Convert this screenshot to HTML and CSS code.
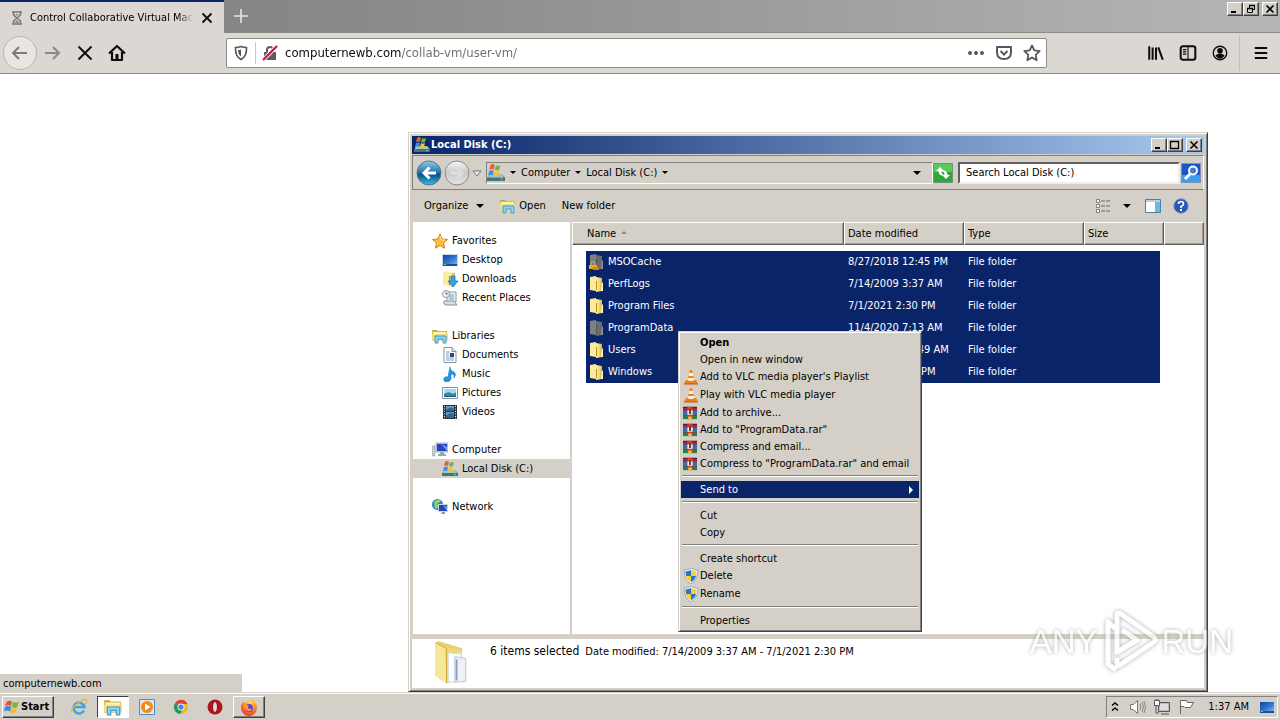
FILE: index.html
```html
<!DOCTYPE html>
<html lang="en">
<head>
<meta charset="utf-8">
<title>Control Collaborative Virtual Machines</title>
<link rel="stylesheet" href="styles.css">
</head>
<body>
<svg class="defs" aria-hidden="true">
  <defs>
    <linearGradient id="gFolder" x1="0" x2="1"><stop offset="0" stop-color="#fff3a8"/><stop offset=".55" stop-color="#f0d878"/><stop offset="1" stop-color="#d8b040"/></linearGradient>
    <linearGradient id="gBlue" x1="0" y1="0" x2="0" y2="1"><stop offset="0" stop-color="#8fd0ee"/><stop offset=".5" stop-color="#1d6ea8"/><stop offset=".55" stop-color="#0a4a86"/><stop offset="1" stop-color="#35c0ec"/></linearGradient>
    <linearGradient id="gGrey" x1="0" y1="0" x2="0" y2="1"><stop offset="0" stop-color="#f4f4f4"/><stop offset=".5" stop-color="#c9c9c9"/><stop offset="1" stop-color="#e6e6e6"/></linearGradient>
    <linearGradient id="gScreen" x1="0" y1="0" x2="1" y2="1"><stop offset="0" stop-color="#12419c"/><stop offset=".5" stop-color="#2e74cf"/><stop offset="1" stop-color="#7db8ee"/></linearGradient>
    <radialGradient id="gFox" cx=".6" cy=".2" r=".9"><stop offset="0" stop-color="#ffe040"/><stop offset=".5" stop-color="#ff8a1e"/><stop offset="1" stop-color="#e8204e"/></radialGradient>
  </defs>
  <symbol id="drive" viewBox="0 0 16 16">
    <path d="M2 9h11l3 3v3H0v-2z" fill="#5b8d8c"/><path d="M0 12h16v3H0z" fill="#477574"/><path d="M2 9h11l2 3H1z" fill="#a9c5c0"/><path d="M12 13h2v1h-2z" fill="#6de05c"/>
    <path d="M3 1q2-2 4 0L6 5Q4 4 2 5z" fill="#e8622c"/><path d="M8 1q2 1 4 0l-1 4q-2 1-4 0z" fill="#71b544"/><path d="M2 6q2-1 4 0l-1 4q-2-1-4 0z" fill="#3f8de0"/><path d="M7 6q2 1 4 0l-1 4q-2 1-4 0z" fill="#f5c52c"/>
  </symbol>
  <symbol id="folder" viewBox="0 0 16 16">
    <path d="M1 1l6-1v15l-6-1z" fill="#fbeb9c"/><path d="M7 1l6 1v13l-6 1z" fill="url(#gFolder)"/><path d="M13 6l1 1v8h-2z" fill="#fff7c4"/><path d="M7.500 5v9" stroke="#b58e28"/>
  </symbol>
  <symbol id="folder-dim" viewBox="0 0 16 16">
    <path d="M1 1l6-1v15l-6-1z" fill="#7c8080"/><path d="M7 1l6 1v13l-6 1z" fill="#696c6c"/><path d="M13 6l1 1v8h-2z" fill="#8f918e"/><path d="M7.500 5v9" stroke="#51565b"/>
  </symbol>
  <symbol id="folder-lock" viewBox="0 0 16 16">
    <use href="#folder-dim"/><path d="M2 11V9q2-3 4 0v2" fill="none" stroke="#bcaf76"/><path d="M0 11h8v4H0z" fill="#efa924"/><path d="M4 13h6v3H4z" fill="#c98919"/>
  </symbol>
  <symbol id="library" viewBox="0 0 16 16">
    <path d="M0 2h5l1 1h9v10H0z" fill="#d8b34c"/><path d="M1 4h13v3H1z" fill="#fff4ae"/><path d="M0 6h16v7H0z" fill="#f3dc84"/><path d="M3 15V8h11v7h-3v-4H6v4z" fill="#8fd3f2" stroke="#3e9ccb"/><path d="M1 3h4" stroke="#77b86e"/>
  </symbol>
  <symbol id="star" viewBox="0 0 16 16"><path d="M8 1l2 5 5.500.5-4 3.500 1.200 5.200L8 12.500l-4.700 2.700L4.500 10l-4-3.500L6 6z" fill="#ffbd3d" stroke="#df7d12"/><path d="M8 3l1 4h4" stroke="#ffe9a0" fill="none"/></symbol>
  <symbol id="desktop" viewBox="0 0 16 16"><path d="M0 2h16v12H0z" fill="#c7d6e5"/><path d="M1 3h14v10H1z" fill="url(#gScreen)"/><path d="M1 12h14v2H1z" fill="#234f8b"/><path d="M2 12h2v1H2z" fill="#73d67a"/></symbol>
  <symbol id="downloads" viewBox="0 0 16 16"><use href="#folder"/><path d="M9 5h4v5h3l-5 6-5-6h3z" fill="#3ba1e8" stroke="#1468ad" stroke-width=".7"/></symbol>
  <symbol id="recent" viewBox="0 0 16 16"><path d="M5 2h9v10H5z" fill="#edf2f6" stroke="#8c99a4"/><path d="M7 5h5M7 7h5M7 9h5" stroke="#799bbb"/><path d="M2 11h10l3 4H4q-3 0-2-4z" fill="#d8dee3" stroke="#8894a0"/><circle cx="4" cy="4" r="3.500" fill="#f6f6f6" stroke="#8b98a5"/><path d="M4 2v2h2" fill="none" stroke="#546577"/></symbol>
  <symbol id="doc" viewBox="0 0 16 16"><path d="M2 .5h8l4 4v11H2z" fill="#fff" stroke="#8492a1"/><path d="M10 .5v4h4" fill="#dae4ed" stroke="#8492a1"/><path d="M4 5h4M4 7h3M4 9h3M4 11h8M4 13h8" stroke="#7ba0c6"/><path d="M8 6h4v4H8z" fill="#284b7c"/></symbol>
  <symbol id="music" viewBox="0 0 16 16"><path d="M8 1q0 4 4 5 3 2 0 6 1-4-3-4v5q-1 3-5 3-3-1-2-4 2-2 4-1z" fill="#2696e3" stroke="#1478bd" stroke-width=".6"/></symbol>
  <symbol id="pictures" viewBox="0 0 16 16"><path d="M.5 2.500h15v11H.5z" fill="#fff" stroke="#85919e"/><path d="M2 4h12v8H2z" fill="#9ddcf3"/><path d="M2 9q4-3 7-1t5-1v5H2z" fill="#338b90"/><path d="M2 11h12v1H2z" fill="#1f567f"/></symbol>
  <symbol id="videos" viewBox="0 0 16 16"><path d="M1 1h14v14H1z" fill="#2d3439"/><path d="M4 2h8v5H4zM4 8h8v6H4z" fill="#5c9cc8"/><path d="M4 6q4-4 8-1v2H4zM4 12q4-5 8-2v4H4z" fill="#3a6485"/><path d="M2.500 2v13M13.500 2v13" stroke="#e8eef2" stroke-dasharray="1 1.500"/></symbol>
  <symbol id="computer" viewBox="0 0 16 16"><path d="M0 4h3v10H0z" fill="#c7cbd0" stroke="#8c9198" stroke-width=".5"/><path d="M4 1h12v9H4z" fill="#cbd6e4" stroke="#7b8ba5" stroke-width=".6"/><path d="M5 2h10v7H5z" fill="#2544b8"/><path d="M9 2l6 3v4z" fill="#6f9eee"/><path d="M8 10h4v2h2v2H6v-2h2z" fill="#9ba5b2"/></symbol>
  <symbol id="network" viewBox="0 0 16 16"><circle cx="5.500" cy="5.500" r="5.500" fill="#2c86c9"/><path d="M2 3q4-4 7-1L5 5l2 3-4 2z" fill="#8fd66a"/><path d="M6 5h10v8H6z" fill="#cbd6e4"/><path d="M7 6h8v6H7z" fill="#1f45b8"/><path d="M11 6l4 2v4z" fill="#68a3ee"/><path d="M10 13h3v2h-4z" fill="#8f99a5"/></symbol>
  <symbol id="vlc" viewBox="0 0 16 16"><path d="M3 11h10l2 4H1z" fill="#ee7d13"/><path d="M7 1h2l3 11q-4 2-8 0z" fill="#f58417"/><path d="M6.200 4h3.600l.8 3H5.400zM4.800 9h6.400l.5 2q-4 2-7.400 0z" fill="#f5efe8"/><path d="M1 15h14" stroke="#b85a10"/></symbol>
  <symbol id="rar" viewBox="0 0 16 16"><path d="M0 1h16v4H0z" fill="#a81f55"/><path d="M0 6h16v4H0z" fill="#2c6cc4"/><path d="M0 11h16v4H0z" fill="#24833e"/><path d="M0 1.500h16M0 5.500h16M0 10.500h16" stroke="#222"/><path d="M5 1h6v14H5z" fill="#d33b2d"/><path d="M5 5h6v5H5z" fill="#f2eee4"/><path d="M7 4h2v5H7z" fill="#333"/><path d="M6 12h4v3H6z" fill="#e8c94c"/></symbol>
  <symbol id="shield" viewBox="0 0 16 16"><path d="M8 0q3 2 7 2 0 10-7 14Q1 12 1 2q4 0 7-2z" fill="#e9eef2" stroke="#8394a3" stroke-width=".7"/><path d="M8 2v6H3L2.500 3.500Q6 3 8 2z" fill="#2a74c9"/><path d="M8 2v6h5l.5-4.500Q10 3 8 2z" fill="#f7cf36"/><path d="M3 8h5v6Q4 12 3 8z" fill="#f7cf36"/><path d="M13 8H8v6q4-2 5-6z" fill="#2a74c9"/></symbol>
  <symbol id="flag" viewBox="0 0 18 16"><path d="M3 2q3-2 6 0L8 7Q5 5 1 7z" fill="#e6562b"/><path d="M10 2q3 2 7 0l-2 6q-3 2-6 0z" fill="#78b83e"/><path d="M1 8q4-2 7 0l-1 5q-3-2-7 0z" fill="#3c87df"/><path d="M9 9q3 2 6 0l-2 5q-3 2-6 0z" fill="#f4bd24"/></symbol>
</svg>

<div class="screen">
  <header class="tabstrip">
    <div class="tab">
      <svg class="i16" viewBox="0 0 16 16"><path d="M3 2h10M3 14h10M4.500 2v3L8 8l3.500-3V2M4.500 14v-3L8 8l3.500 3v3" fill="none" stroke="#77777a" stroke-width="1.500"/><path d="M6 12l2-2 2 2v1H6zM6 4h4L8 6z" fill="#8d8d90"/></svg>
      <span class="tab-title">Control Collaborative Virtual Machines</span>
      <button class="bare" aria-label="Close tab"><svg class="i16" viewBox="0 0 16 16"><path d="M3.500 3.500l9 9m0-9l-9 9" stroke="#0c0c0d" stroke-width="1.800"/></svg></button>
    </div>
    <button class="bare newtab" aria-label="New tab"><svg class="i16" viewBox="0 0 16 16"><path d="M8 1v14M1 8h14" stroke="#e4e4e4" stroke-width="1.600"/></svg></button>
    <div class="winbtns browser-btns">
      <button class="winbtn" aria-label="Minimize"><svg viewBox="0 0 12 10"><path d="M2 8h5" stroke="#000" stroke-width="2"/></svg></button>
      <button class="winbtn" aria-label="Restore"><svg viewBox="0 0 12 10"><path d="M4.500 4V1.500h5v4H8M2.500 4.500h5v4h-5z" fill="none" stroke="#000"/><path d="M4 1.500h6M2 4.500h6" stroke="#000" stroke-width="1.500"/></svg></button>
      <button class="winbtn close" aria-label="Close"><svg viewBox="0 0 12 10"><path d="M2.500 1.500l7 7m0-7l-7 7" stroke="#000" stroke-width="1.600"/></svg></button>
    </div>
  </header>

  <nav class="toolbar" aria-label="Browser">
    <div class="navbtns">
      <button class="bare back" aria-label="Back"><svg class="i20" viewBox="0 0 20 20"><path d="M17 10H3m6-6l-6 6 6 6" fill="none" stroke="#7d7b78" stroke-width="2"/></svg></button>
      <button class="bare" aria-label="Forward"><svg class="i20" viewBox="0 0 20 20"><path d="M2 10h14m-6-6l6 6-6 6" fill="none" stroke="#8a8885" stroke-width="2"/></svg></button>
      <button class="bare" aria-label="Stop"><svg class="i20" viewBox="0 0 20 20"><path d="M3.500 3.500l13 13m0-13l-13 13" stroke="#0c0c0d" stroke-width="2"/></svg></button>
      <button class="bare" aria-label="Home"><svg class="i20" viewBox="0 0 20 20"><path d="M2 10.500L10 3l8 7.500M5 9v8h10V9" fill="none" stroke="#0c0c0d" stroke-width="2.200" stroke-linejoin="round"/><path d="M8.500 11h3v6h-3z" fill="#0c0c0d"/></svg></button>
    </div>
    <div class="urlbar">
      <svg class="i16" viewBox="0 0 16 16"><path d="M8 1.500q2.500 1 5.500 1 .5 9-5.500 12Q2 11.500 2.500 2.500q3 0 5.500-1z" fill="none" stroke="#55555a" stroke-width="1.600"/><path d="M8 4.500v7Q5 9.500 5 5q2 0 3-.5z" fill="#55555a"/></svg>
      <span class="urlsep"></span>
      <svg class="i16" viewBox="0 0 16 16"><path d="M2 7h12v8H2z" fill="#5b5b60"/><path d="M5 8V5q0-3 3-3t3 3v3" fill="none" stroke="#5b5b60" stroke-width="2"/><path d="M1 15L15 1" stroke="#fff" stroke-width="4"/><path d="M1 15L15 1" stroke="#e0104c" stroke-width="2.400"/></svg>
      <input class="url" type="text" aria-label="Address" value="computernewb.com/collab-vm/user-vm/">
      <div class="urlacts">
        <button class="bare" aria-label="Page actions"><svg class="i20" viewBox="0 0 20 20"><g fill="#58585c"><circle cx="4" cy="10" r="2"/><circle cx="10" cy="10" r="2"/><circle cx="16" cy="10" r="2"/></g></svg></button>
        <button class="bare" aria-label="Save to Pocket"><svg class="i20" viewBox="0 0 20 20"><path d="M3 4h14v5q0 7-7 7T3 9z" fill="none" stroke="#58585c" stroke-width="2" stroke-linejoin="round"/><path d="M6.500 8l3.500 3.500L13.500 8" fill="none" stroke="#58585c" stroke-width="2"/></svg></button>
        <button class="bare" aria-label="Bookmark"><svg class="i20" viewBox="0 0 20 20"><path d="M10 2.500l2.300 4.900 5.400.7-4 3.700 1 5.300L10 14.500l-4.700 2.600 1-5.300-4-3.700 5.400-.7z" fill="none" stroke="#58585c" stroke-width="1.800" stroke-linejoin="round"/></svg></button>
      </div>
    </div>
    <div class="tools">
      <button class="bare" aria-label="Library"><svg class="i18" viewBox="0 0 16 16"><path d="M2 2v12M5 3v11M8 3v11M10 3l4 11" stroke="#0c0c0d" stroke-width="1.800" fill="none"/></svg></button>
      <button class="bare" aria-label="Sidebars"><svg class="i18" viewBox="0 0 16 16"><rect x="1.500" y="2" width="13" height="12" rx="2" fill="none" stroke="#0c0c0d" stroke-width="1.800"/><path d="M8 2v12M3.500 5h3M3.500 7h3M3.500 9h3" stroke="#0c0c0d"/></svg></button>
      <button class="bare" aria-label="Account"><svg class="i18" viewBox="0 0 16 16"><circle cx="8" cy="8" r="6" fill="none" stroke="#0c0c0d" stroke-width="1.200"/><circle cx="8" cy="6" r="2.500" fill="#0c0c0d"/><path d="M4 10q4-3 8 0-1.500 3-4 3t-4-3z" fill="#0c0c0d"/></svg></button>
      <span class="toolsep"></span>
      <button class="bare" aria-label="Open menu"><svg class="i18" viewBox="0 0 16 16"><path d="M2.500 3.500h11M2.500 8h11M2.500 12.500h11" stroke="#0c0c0d" stroke-width="1.800"/></svg></button>
    </div>
  </nav>

  <main class="page"><div class="status">computernewb.com</div></main>

  <footer class="taskbar">
    <button class="start"><svg class="i16" viewBox="0 0 18 16"><use href="#flag"/></svg>Start</button>
    <div class="tasks">
      <button class="task" aria-label="Internet Explorer"><svg class="i18" viewBox="0 0 18 18"><path d="M14 12.500A5.500 5.500 0 1 1 14.500 9H5" fill="none" stroke="#39a7e5" stroke-width="2.600"/><path d="M2 15Q0 12 7 6t9.500-4q1 1-1 4" fill="none" stroke="#e8b936" stroke-width="1.300"/></svg></button>
      <button class="task on" aria-label="Windows Explorer"><svg class="i18" viewBox="0 0 16 16"><use href="#library"/></svg></button>
      <button class="task" aria-label="Media Player"><svg class="i18" viewBox="0 0 18 18"><path d="M1.500 1.500h15v15h-15z" fill="#d8e8f6" stroke="#4c8fc6"/><circle cx="9" cy="9" r="6" fill="#f38a14"/><path d="M7 5.500l5.500 3.500L7 12.500z" fill="#fff"/></svg></button>
      <button class="task" aria-label="Chrome"><svg class="i18" viewBox="0 0 18 18"><circle cx="9" cy="9" r="7" fill="#e8b92a"/><path d="M9 9L3 5.300A7 7 0 0 1 15.500 6H9z" fill="#dc4437"/><path d="M9 9L3 5.300A7 7 0 0 0 8 16l3-5z" fill="#229a56"/><circle cx="9" cy="9" r="3.500" fill="#f4f4f4"/><circle cx="9" cy="9" r="2.600" fill="#4384ee"/></svg></button>
      <button class="task" aria-label="Opera"><svg class="i18" viewBox="0 0 18 18"><circle cx="9" cy="9" r="7.500" fill="#b5131c"/><ellipse cx="9" cy="9" rx="2.500" ry="5.500" fill="#e8d6d4" stroke="#741015"/></svg></button>
      <button class="task raised" aria-label="Firefox"><svg class="i18" viewBox="0 0 18 18"><path d="M3 4l2 1q2-2 5-1l2-3q5 4 5 9a8 8 0 0 1-16 0q0-4 2-6z" fill="url(#gFox)"/><circle cx="9" cy="10" r="4" fill="#6a3fd0"/><path d="M4 7q3-1 5 1-2 1-1 2 2 2 4 0-1 4-4 3-4-1-4-6z" fill="#ff9a2a"/></svg></button>
    </div>
    <div class="tray">
      <svg class="i16" viewBox="0 0 16 16"><path d="M5 6.500L8 4l3 2.500M5 11.500L8 9l3 2.500" fill="none" stroke="#000" stroke-width="1.500"/></svg>
      <svg class="i18" viewBox="0 0 18 18"><path d="M1.500 6.500h3l4-4v13l-4-4h-3z" fill="#fff" stroke="#777"/><path d="M11 6q2 3 0 6M13 4q3 5 0 10M15 3q3 6 0 12" fill="none" stroke="#888"/></svg>
      <svg class="i18" viewBox="0 0 18 18"><path d="M5.500 4.500h11v9h-11z" fill="#bbb" stroke="#555"/><path d="M7 6h8v6H7z" fill="#ddd"/><path d="M8 16h8M3 8v7h3" fill="none" stroke="#555"/><path d="M1.500 2.500h5v5h-5z" fill="#fff" stroke="#555"/><path d="M3 1v2M5 1v2" stroke="#555"/></svg>
      <svg class="i18" viewBox="0 0 18 18"><path d="M3.500 16V2.500h6l1 2h6l-3 5H8l-1-1H3.500" fill="#fff" stroke="#666"/></svg>
      <time class="clock">1:37 AM</time>
      <svg class="i16" viewBox="0 0 16 16"><use href="#desktop"/></svg>
    </div>
  </footer>

  <section class="window" aria-label="Local Disk (C:)">
    <div class="titlebar">
      <svg class="i16"><use href="#drive"/></svg><h1 class="wintitle">Local Disk (C:)</h1>
      <div class="winbtns">
        <button class="winbtn" aria-label="Minimize"><svg viewBox="0 0 12 10"><path d="M2 8h5" stroke="#000" stroke-width="2"/></svg></button>
        <button class="winbtn" aria-label="Maximize"><svg viewBox="0 0 12 10"><path d="M1.500 1.500h8v7h-8zM1 1.500h9" fill="none" stroke="#000" stroke-width="1.300"/></svg></button>
        <button class="winbtn close" aria-label="Close"><svg viewBox="0 0 12 10"><path d="M2.500 1.500l7 7m0-7l-7 7" stroke="#000" stroke-width="1.600"/></svg></button>
      </div>
    </div>
    <div class="navrow">
      <button class="bare" aria-label="Back"><svg class="i26" viewBox="0 0 26 26"><circle cx="13" cy="13" r="12" fill="url(#gBlue)" stroke="#5d7487"/><path d="M20 13H8m5.500-5.500L8 13l5.500 5.500" fill="none" stroke="#fff" stroke-width="3"/></svg></button>
      <button class="bare" aria-label="Forward"><svg class="i26" viewBox="0 0 26 26"><circle cx="13" cy="13" r="12" fill="url(#gGrey)" stroke="#8a8a8a"/><path d="M6 13h12m-5.500-5.500L18 13l-5.500 5.500" fill="none" stroke="#dedede" stroke-width="3"/></svg></button>
      <button class="bare" aria-label="Recent pages"><svg class="i10" viewBox="0 0 10 10"><path d="M1 3h8L5 8z" fill="#eee" stroke="#777"/></svg></button>
      <div class="address">
        <svg class="i18" viewBox="0 0 16 16"><use href="#drive"/></svg>
        <i class="arrow"></i><button class="bare">Computer</button><i class="arrow"></i><button class="bare">Local Disk (C:)</button><i class="arrow"></i>
        <button class="bare drop" aria-label="Previous locations"><i class="arrow big"></i></button>
      </div>
      <button class="bare" aria-label="Refresh"><svg class="i20" viewBox="0 0 20 20"><path d="M.5.5h19v19H.5z" fill="#2fa83b" stroke="#71917a"/><path d="M1 1h18v8H1z" fill="#58c95b"/><path d="M3 8l4-4 4 4H8.500q0 4 3.500 4-6 2-6.500-4zM17 12l-4 4-4-4h2.500q0-4-3.500-4 6-2 6.500 4z" fill="#fff"/></svg></button>
      <input class="search" type="text" aria-label="Search" value="Search Local Disk (C:)">
      <button class="bare" aria-label="Search"><svg class="i20" viewBox="0 0 20 20"><path d="M.5.5h19v19H.5z" fill="#1956c7" stroke="#7d92b5"/><path d="M1 12h18v7H1z" fill="#3d9ced"/><circle cx="12" cy="7.500" r="4" fill="#3b7bdc" stroke="#fff" stroke-width="2"/><path d="M9 11l-5 5" stroke="#fff" stroke-width="3"/></svg></button>
    </div>
    <div class="cmdbar">
      <button class="bare organize">Organize <i class="arrow big"></i></button>
      <button class="bare open"><svg class="i16"><use href="#library"/></svg>Open</button>
      <button class="bare">New folder</button>
      <div class="cmdright">
        <button class="bare" aria-label="Views"><svg class="i16" viewBox="0 0 16 16"><path d="M1.500 1.500h3v3h-3zM1.500 6.500h3v3h-3zM1.500 11.500h3v3h-3z" fill="#fff" stroke="#7d7d7d"/><path d="M6 3h4m1 0h4M6 8h4m1 0h4M6 13h4m1 0h4" stroke="#606870"/></svg></button>
        <button class="bare" aria-label="More views"><i class="arrow big"></i></button>
        <button class="bare pane" aria-label="Preview pane"><svg class="i16" viewBox="0 0 16 16"><path d="M.5 1.500h15v13H.5z" fill="#fff" stroke="#507fa9"/><path d="M1 2h14v2H1z" fill="#b5d3e8"/><path d="M10 4h5v10h-5z" fill="#65bedb"/></svg></button>
        <button class="bare" aria-label="Help"><svg class="i16" viewBox="0 0 16 16"><circle cx="8" cy="8" r="7.200" fill="#2556bd" stroke="#8291af"/><path d="M5.500 6q0-2.500 2.500-2.500T10.500 6q0 1.500-2.500 2.500V10" fill="none" stroke="#fff" stroke-width="1.700"/><path d="M7 11h2v2H7z" fill="#fff"/></svg></button>
      </div>
    </div>
    <div class="body">
      <ul class="tree">
        <li><svg class="i16"><use href="#star"/></svg>Favorites</li>
        <li class="sub"><svg class="i16"><use href="#desktop"/></svg>Desktop</li>
        <li class="sub"><svg class="i16"><use href="#downloads"/></svg>Downloads</li>
        <li class="sub"><svg class="i16"><use href="#recent"/></svg>Recent Places</li>
        <li class="group"><svg class="i16"><use href="#library"/></svg>Libraries</li>
        <li class="sub"><svg class="i16"><use href="#doc"/></svg>Documents</li>
        <li class="sub"><svg class="i16"><use href="#music"/></svg>Music</li>
        <li class="sub"><svg class="i16"><use href="#pictures"/></svg>Pictures</li>
        <li class="sub"><svg class="i16"><use href="#videos"/></svg>Videos</li>
        <li class="group"><svg class="i16"><use href="#computer"/></svg>Computer</li>
        <li class="sub current"><svg class="i16"><use href="#drive"/></svg>Local Disk (C:)</li>
        <li class="group"><svg class="i16"><use href="#network"/></svg>Network</li>
      </ul>
      <div class="list">
        <table class="files">
          <colgroup><col><col class="c-date"><col class="c-type"><col class="c-size"><col class="c-rest"></colgroup>
          <thead><tr><th>Name <i class="sort"></i></th><th>Date modified</th><th>Type</th><th>Size</th><th></th></tr></thead>
          <tbody>
            <tr><td><span class="file"><svg class="i16"><use href="#folder-lock"/></svg>MSOCache</span></td><td>8/27/2018 12:45 PM</td><td>File folder</td><td></td><td></td></tr>
            <tr><td><span class="file"><svg class="i16"><use href="#folder"/></svg>PerfLogs</span></td><td>7/14/2009 3:37 AM</td><td>File folder</td><td></td><td></td></tr>
            <tr><td><span class="file"><svg class="i16"><use href="#folder"/></svg>Program Files</span></td><td>7/1/2021 2:30 PM</td><td>File folder</td><td></td><td></td></tr>
            <tr><td><span class="file"><svg class="i16"><use href="#folder-dim"/></svg>ProgramData</span></td><td>11/4/2020 7:13 AM</td><td>File folder</td><td></td><td></td></tr>
            <tr><td><span class="file"><svg class="i16"><use href="#folder"/></svg>Users</span></td><td>7/14/2009 12:49 AM</td><td>File folder</td><td></td><td></td></tr>
            <tr><td><span class="file"><svg class="i16"><use href="#folder"/></svg>Windows</span></td><td>7/1/2021 2:30 PM</td><td>File folder</td><td></td><td></td></tr>
          </tbody>
        </table>
      </div>
    </div>
    <div class="details">
      <svg class="bigfolder" viewBox="0 0 40 48"><path d="M2 2l3-2 26 8v34L14 46 2 38z" fill="#e9d26a"/><path d="M2 2l12 6v38L2 38z" fill="#f6e79a"/><path d="M12 7l19 3v34l-17 2z" fill="#ecd97f"/><path d="M16 13l14 1v30l-14 1z" fill="#fff" stroke="#d5dade"/><path d="M23 17l12 2v25l-12 1z" fill="#eef2f8" stroke="#b8c2d2"/><path d="M25 20v23" stroke="#8a9cc4" stroke-width="2"/><path d="M2 2l12 6v38" fill="none" stroke="#c9a837"/></svg>
      <p class="summary"><span class="count">6 items selected</span><span>Date modified: 7/14/2009 3:37 AM - 7/1/2021 2:30 PM</span></p>
    </div>
  </section>

  <div class="menu" role="menu">
    <button role="menuitem" class="item bold">Open</button>
    <button role="menuitem" class="item">Open in new window</button>
    <button role="menuitem" class="item tall"><svg class="i16"><use href="#vlc"/></svg>Add to VLC media player's Playlist</button>
    <button role="menuitem" class="item tall"><svg class="i16"><use href="#vlc"/></svg>Play with VLC media player</button>
    <button role="menuitem" class="item"><svg class="i14"><use href="#rar"/></svg>Add to archive...</button>
    <button role="menuitem" class="item"><svg class="i14"><use href="#rar"/></svg>Add to "ProgramData.rar"</button>
    <button role="menuitem" class="item"><svg class="i14"><use href="#rar"/></svg>Compress and email...</button>
    <button role="menuitem" class="item"><svg class="i14"><use href="#rar"/></svg>Compress to "ProgramData.rar" and email</button>
    <hr>
    <button role="menuitem" class="item active">Send to <i class="more"></i></button>
    <hr>
    <button role="menuitem" class="item">Cut</button>
    <button role="menuitem" class="item">Copy</button>
    <hr>
    <button role="menuitem" class="item">Create shortcut</button>
    <button role="menuitem" class="item tall"><svg class="i16"><use href="#shield"/></svg>Delete</button>
    <button role="menuitem" class="item tall"><svg class="i16"><use href="#shield"/></svg>Rename</button>
    <hr>
    <button role="menuitem" class="item">Properties</button>
  </div>

  <div class="watermark">
    <span>ANY</span>
    <svg class="play" viewBox="0 0 60 64"><path d="M17 15V5q0-3 4-1l33 23q3 3 0 5L20 55q-3 2-3-2v-5M17 15v27l20-12-15-10M17 20L8 12v42l8 6" fill="none" stroke-width="5" stroke="#fff" stroke-linejoin="round"/></svg>
    <span>RUN</span>
  </div>
</div>
</body>
</html>
```
FILE: styles.css
```css
* { box-sizing: border-box; }
body { margin: 0; }
body, button, input {
  font-family: "DejaVu Sans Condensed", "Noto Sans", sans-serif;
  font-size: 11px;
  line-height: 16px;
  color: #000;
}
button { cursor: default; }
svg { display: block; flex: none; }
.defs { position: absolute; width: 0; height: 0; }
.i10 { width: 10px; height: 10px; }
.i14 { width: 14px; height: 14px; }
.i16 { width: 16px; height: 16px; }
.i18 { width: 18px; height: 18px; }
.i20 { width: 20px; height: 20px; }
.i26 { width: 26px; height: 26px; }
.bare { display: flex; align-items: center; padding: 0; border: 0; background: none; }

.screen { position: relative; display: flex; flex-direction: column; height: 100vh; overflow: hidden; background: #fff; }

/* Browser */
.tabstrip { display: flex; height: 33px; background: linear-gradient(90deg, #808080, #8a8a8a 30%, #b6b6b6); border-bottom: 1px solid #8c8a87; }
.tab { display: flex; align-items: center; gap: 5px; width: 224px; height: 33px; padding: 0 9px; background: #dbd7d2; border-top: 2px solid #0a246a; }
.tab-title { flex: 1; min-width: 0; overflow: hidden; white-space: nowrap; mask-image: linear-gradient(90deg, #000 90%, transparent); }
.newtab { padding: 0 9px; }
.winbtns { display: flex; margin-left: auto; }
.browser-btns { padding: 2px 2px 0 0; }
.winbtn { width: 16px; height: 14px; padding: 0 1px 1px; background: #d4d0c8; border: 1px solid; border-color: #fff #404040 #404040 #fff; box-shadow: inset -1px -1px #808080; }
.winbtn svg { width: 12px; height: 10px; }
.close { margin-left: 3px; }
.toolbar { display: flex; align-items: center; height: 41px; background: #dbd7d2; border-bottom: 1px solid #8c8a87; }
.navbtns { display: flex; align-items: center; width: 226px; padding-left: 3px; gap: 12px; }
.back { justify-content: center; width: 34px; height: 34px; margin-right: -6px; border: 1px solid #b9b5b0; border-radius: 50%; background: #e9e6e2; }
.urlbar { display: flex; flex: 1; align-items: center; height: 30px; padding: 0 4px 0 6px; background: #fff; border: 1px solid #8c8a87; border-radius: 2px; }
.urlsep { width: 1px; height: 22px; margin: 0 6px; background: #c8c8c8; }
.url { flex: 1; min-width: 0; margin-left: 7px; padding: 0; border: 0; outline: 0; font-size: 13px; color: transparent; background: linear-gradient(90deg, #0c0c0d 116px, #6c6c6f 116px); background-clip: text; -webkit-background-clip: text; }
.urlacts { display: flex; gap: 8px; }
.tools { display: flex; align-items: center; width: 233px; padding-right: 10px; gap: 14px; justify-content: flex-end; }
.toolsep { width: 1px; height: 36px; margin: 0 -2px 0 -4px; background: #c2beb8; }
.page { position: relative; flex: 1; }
.status { position: absolute; left: 0; bottom: 0; width: 242px; padding: 2px 3px 0; background: #d4d0c8; }

/* Taskbar */
.taskbar { display: flex; align-items: center; gap: 9px; height: 28px; padding: 2px; background: #d4d0c8; border-top: 1px solid #d4d0c8; box-shadow: inset 0 1px #fff; }
.start { display: flex; align-items: center; gap: 1px; height: 22px; padding: 0 4px 0 1px; font-weight: bold; background: #d4d0c8; border: 1px solid; border-color: #fff #404040 #404040 #fff; box-shadow: inset -1px -1px #808080; }
.tasks { display: flex; gap: 2px; }
.task { display: flex; align-items: center; justify-content: center; width: 32px; height: 22px; padding: 0; background: none; border: 1px solid transparent; }
.on { background: #fff; border-color: #404040 #fff #fff #404040; }
.raised { border-color: #fff #404040 #404040 #fff; box-shadow: inset -1px -1px #808080; }
.tray { display: flex; align-items: center; gap: 6px; height: 22px; margin-left: auto; padding: 0 2px 0 0; border: 1px solid; border-color: #808080 #fff #fff #808080; }
.clock { margin: 0 4px 0 7px; }

/* Explorer window */
.window { position: absolute; left: 408px; top: 132px; display: flex; flex-direction: column; width: 800px; height: 560px; padding: 3px; background: #d4d0c8; border: 1px solid; border-color: #d4d0c8 #404040 #404040 #d4d0c8; box-shadow: inset 1px 1px #fff, inset -1px -1px #808080; }
.titlebar { display: flex; align-items: center; gap: 1px; height: 18px; padding: 0 2px; background: linear-gradient(90deg, #0a246a, #a6caf0); }
.wintitle { margin: 0; font-size: 11px; color: #fff; }
.navrow { display: flex; align-items: center; height: 35px; margin-top: 1px; padding: 0 2px 0 3px; border: 1px solid; border-color: #808080 #fff #808080 #808080; }
.navrow > .bare + .bare { margin-left: 2px; }
.address { display: flex; flex: 1; align-items: center; gap: 5px; height: 22px; margin-left: 4px; border: 1px solid; border-color: #808080 #fff #fff #808080; }
.drop { margin: 0 11px 0 auto; }
.arrow { border: 3px solid transparent; border-top-color: #000; border-bottom: 0; }
.big { border-width: 4px 4px 0; }
.search { width: 222px; height: 22px; margin: 0 1px 0 5px; padding: 0 6px; border: 2px solid; border-color: #606060 #f0eee9 #f0eee9 #606060; background: #fff; }
.cmdbar { display: flex; align-items: center; height: 32px; padding: 0 15px 0 12px; border-bottom: 1px solid #d4d0c8; }
.organize { gap: 8px; }
.open { gap: 3px; margin: 0 16px; }
.cmdright { display: flex; align-items: center; gap: 12px; margin-left: auto; }
.pane { margin-left: 2px; }
.body { display: flex; flex: 1; min-height: 0; }
.tree { flex: none; width: 157px; margin: 0 0 0 1px; padding: 9px 0 0; list-style: none; background: #fff; }
.tree li { display: flex; align-items: center; gap: 4px; height: 19px; padding-left: 19px; }
.tree .sub { padding-left: 29px; }
.tree .group { margin-top: 19px; }
.tree .current { background: #d4d0c8; }
.list { flex: 1; margin-left: 2px; background: #fff; }
.files { width: 100%; table-layout: fixed; border-collapse: separate; border-spacing: 0; text-align: left; }
.c-date, .c-type { width: 120px; }
.c-size { width: 80px; }
.c-rest { width: 40px; }
.files th { height: 23px; padding: 0 3px; font-weight: normal; background: #d4d0c8; border: 1px solid; border-color: #fff #606060 #606060 #fff; box-shadow: inset -1px -1px #a09c95; }
.files th:first-child { padding-left: 14px; }
.sort { display: inline-block; margin: 0 0 3px 2px; border: 3px solid transparent; border-bottom-color: #8e8b86; border-top: 0; }
.files tbody::before { content: ""; display: block; height: 6px; }
.files td { height: 22px; padding: 0 4px; color: #fff; background: #0a246a; white-space: nowrap; }
.files td:first-child { padding-left: 17px; background: linear-gradient(#0a246a, #0a246a) right / calc(100% - 14px) 100% no-repeat; }
.files td:nth-child(4) { background: linear-gradient(#0a246a, #0a246a) left / calc(100% - 4px) 100% no-repeat; }
.files td:last-child { background: none; }
.file { display: flex; align-items: center; gap: 3px; }
.details { display: flex; gap: 18px; height: 54px; padding: 2px 20px; background: #fff; border-top: 5px solid #d4d0c8; }
.bigfolder { width: 40px; height: 44px; }
.summary { display: flex; align-items: baseline; gap: 6px; margin: 2px 0 0; }
.count { font-size: 12px; }

/* Context menu */
.menu { position: absolute; left: 678px; top: 331px; width: 244px; padding: 2px; background: #d4d0c8; border: 1px solid; border-color: #d4d0c8 #404040 #404040 #d4d0c8; box-shadow: inset 1px 1px #fff, inset -1px -1px #808080; }
.item { position: relative; display: flex; align-items: center; width: 100%; height: 17px; padding: 0 6px 0 19px; border: 0; background: none; white-space: nowrap; }
.item svg { position: absolute; left: 2px; }
.tall { height: 18px; }
.bold { font-weight: bold; }
.active { color: #fff; background: #0a246a; }
.more { margin-left: auto; border: 4px solid transparent; border-left-color: #fff; border-right: 0; }
.menu hr { height: 2px; margin: 3px 1px 4px; border: 0; border-top: 1px solid #808080; border-bottom: 1px solid #fff; }

.watermark { position: absolute; right: 47px; bottom: 46px; display: flex; align-items: center; gap: 2px; font-family: "Liberation Sans", sans-serif; font-size: 33px; line-height: 64px; color: #fff; opacity: .7; filter: drop-shadow(0 0 2px #888); }
.play { width: 60px; height: 64px; }
```
